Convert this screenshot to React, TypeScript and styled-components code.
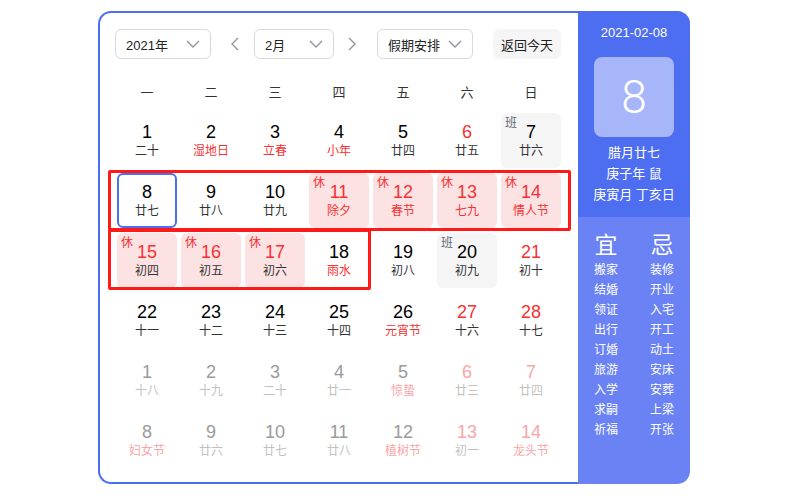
import * as React from 'react'
import styled, { createGlobalStyle } from 'styled-components'

const GlobalStyle = createGlobalStyle`
	html, body {
		margin: 0;
		padding: 0;
		background: #ffffff;
	}
	body {
		font-family: 'Liberation Sans', 'Noto Sans CJK SC', sans-serif;
	}
`

type Day = {
	n: number
	lunar: string
	numRed?: boolean
	lunarRed?: boolean
	tag?: '休' | '班'
	other?: boolean
	selected?: boolean
}

const weeks: Day[][] = [
	[
		{ n: 1, lunar: '二十' },
		{ n: 2, lunar: '湿地日', lunarRed: true },
		{ n: 3, lunar: '立春', lunarRed: true },
		{ n: 4, lunar: '小年', lunarRed: true },
		{ n: 5, lunar: '廿四' },
		{ n: 6, lunar: '廿五', numRed: true },
		{ n: 7, lunar: '廿六', tag: '班' },
	],
	[
		{ n: 8, lunar: '廿七', selected: true },
		{ n: 9, lunar: '廿八' },
		{ n: 10, lunar: '廿九' },
		{ n: 11, lunar: '除夕', tag: '休', numRed: true, lunarRed: true },
		{ n: 12, lunar: '春节', tag: '休', numRed: true, lunarRed: true },
		{ n: 13, lunar: '七九', tag: '休', numRed: true, lunarRed: true },
		{ n: 14, lunar: '情人节', tag: '休', numRed: true, lunarRed: true },
	],
	[
		{ n: 15, lunar: '初四', tag: '休', numRed: true },
		{ n: 16, lunar: '初五', tag: '休', numRed: true },
		{ n: 17, lunar: '初六', tag: '休', numRed: true },
		{ n: 18, lunar: '雨水', lunarRed: true },
		{ n: 19, lunar: '初八' },
		{ n: 20, lunar: '初九', tag: '班' },
		{ n: 21, lunar: '初十', numRed: true },
	],
	[
		{ n: 22, lunar: '十一' },
		{ n: 23, lunar: '十二' },
		{ n: 24, lunar: '十三' },
		{ n: 25, lunar: '十四' },
		{ n: 26, lunar: '元宵节', lunarRed: true },
		{ n: 27, lunar: '十六', numRed: true },
		{ n: 28, lunar: '十七', numRed: true },
	],
	[
		{ n: 1, lunar: '十八', other: true },
		{ n: 2, lunar: '十九', other: true },
		{ n: 3, lunar: '二十', other: true },
		{ n: 4, lunar: '廿一', other: true },
		{ n: 5, lunar: '惊蛰', lunarRed: true, other: true },
		{ n: 6, lunar: '廿三', numRed: true, other: true },
		{ n: 7, lunar: '廿四', numRed: true, other: true },
	],
	[
		{ n: 8, lunar: '妇女节', lunarRed: true, other: true },
		{ n: 9, lunar: '廿六', other: true },
		{ n: 10, lunar: '廿七', other: true },
		{ n: 11, lunar: '廿八', other: true },
		{ n: 12, lunar: '植树节', lunarRed: true, other: true },
		{ n: 13, lunar: '初一', numRed: true, other: true },
		{ n: 14, lunar: '龙头节', numRed: true, lunarRed: true, other: true },
	],
]

const weekdays = ['一', '二', '三', '四', '五', '六', '日']

const goodThings = ['搬家', '结婚', '领证', '出行', '订婚', '旅游', '入学', '求嗣', '祈福']
const badThings = ['装修', '开业', '入宅', '开工', '动土', '安床', '安葬', '上梁', '开张']

const Chevron = (): JSX.Element => (
	<svg width="14" height="8" viewBox="0 0 14 8" fill="none">
		<polyline points="1,1 7,7 13,1" stroke="#9195a3" strokeWidth="1.4" />
	</svg>
)

const Arrow = ({ dir }: { dir: 'left' | 'right' }): JSX.Element => (
	<svg width="8" height="14" viewBox="0 0 8 14" fill="none">
		<polyline
			points={dir === 'left' ? '7,1 1,7 7,13' : '1,1 7,7 1,13'}
			stroke="#9195a3"
			strokeWidth="1.4"
		/>
	</svg>
)

const cellKind = (d: Day): 'plain' | 'rest' | 'work' | 'selected' => {
	if (d.selected) return 'selected'
	if (d.tag === '休') return 'rest'
	if (d.tag === '班') return 'work'
	return 'plain'
}

export default function App(): JSX.Element {
	return (
		<>
			<GlobalStyle />
			<Page>
				<Calendar>
					<Main>
						<Toolbar>
							<Select $width={96}>
								<span>2021年</span>
								<Chevron />
							</Select>
							<ArrowButton $ml={12}>
								<Arrow dir="left" />
							</ArrowButton>
							<Select $width={80} $ml={7}>
								<span>2月</span>
								<Chevron />
							</Select>
							<ArrowButton $ml={6}>
								<Arrow dir="right" />
							</ArrowButton>
							<Select $width={96} $ml={13}>
								<span>假期安排</span>
								<Chevron />
							</Select>
							<TodayButton>返回今天</TodayButton>
						</Toolbar>
						<WeekHeader>
							{weekdays.map((w) => (
								<span key={w}>{w}</span>
							))}
						</WeekHeader>
						<Grid>
							{weeks.flat().map((d, i) => (
								<Cell key={i} $kind={cellKind(d)}>
									{d.tag && <Tag $rest={d.tag === '休'}>{d.tag}</Tag>}
									<Num $red={!!d.numRed} $muted={!!d.other}>
										{d.n}
									</Num>
									<Lunar $red={!!d.lunarRed} $muted={!!d.other}>
										{d.lunar}
									</Lunar>
								</Cell>
							))}
							<Mark style={{ left: -9, top: 57, width: 463, height: 61 }} />
							<Mark style={{ left: -9, top: 116, width: 263, height: 61 }} />
						</Grid>
					</Main>
					<Side>
						<Today>
							<DateLine>2021-02-08</DateLine>
							<BigDay>8</BigDay>
							<InfoLine>腊月廿七</InfoLine>
							<InfoLine>庚子年 鼠</InfoLine>
							<InfoLine>庚寅月 丁亥日</InfoLine>
						</Today>
						<Advice>
							<AdviceColumn>
								<AdviceTitle>宜</AdviceTitle>
								{goodThings.map((t) => (
									<AdviceItem key={t}>{t}</AdviceItem>
								))}
							</AdviceColumn>
							<AdviceColumn>
								<AdviceTitle>忌</AdviceTitle>
								{badThings.map((t) => (
									<AdviceItem key={t}>{t}</AdviceItem>
								))}
							</AdviceColumn>
						</Advice>
					</Side>
				</Calendar>
			</Page>
		</>
	)
}

const Page = styled.div`
	width: 795px;
	height: 501px;
	box-sizing: border-box;
	padding: 11px 0 0 98px;
`

const Calendar = styled.div`
	display: flex;
	width: 592px;
	height: 473px;
`

const Main = styled.div`
	width: 480px;
	box-sizing: border-box;
	border: 2px solid #4e6ef2;
	border-right: none;
	border-radius: 13px 0 0 13px;
	padding: 16px 17px 0 15px;
	display: flex;
	flex-direction: column;
`

const Toolbar = styled.div`
	display: flex;
	align-items: center;
	height: 30px;
`

const Select = styled.div<{ $width: number; $ml?: number }>`
	width: ${(p) => p.$width}px;
	height: 30px;
	margin-left: ${(p) => p.$ml || 0}px;
	box-sizing: border-box;
	border: 1px solid #d7d9e0;
	border-radius: 6px;
	padding: 0 10px 0 10px;
	display: flex;
	align-items: center;
	justify-content: space-between;
	font-size: 13px;
	color: #222222;
`

const ArrowButton = styled.div<{ $ml: number }>`
	width: 24px;
	height: 30px;
	margin-left: ${(p) => p.$ml}px;
	display: flex;
	align-items: center;
	justify-content: center;
`

const TodayButton = styled.div`
	width: 68px;
	height: 30px;
	margin-left: 20px;
	border-radius: 6px;
	background: #f5f5f6;
	font-size: 13px;
	color: #222222;
	display: flex;
	align-items: center;
	justify-content: center;
`

const WeekHeader = styled.div`
	display: grid;
	grid-template-columns: repeat(7, 60px);
	column-gap: 4px;
	margin: 12px 0 2px 2px;
	height: 40px;
	align-items: center;
	font-size: 13px;
	color: #333333;

	span {
		text-align: center;
	}
`

const Grid = styled.div`
	position: relative;
	margin-left: 2px;
	display: grid;
	grid-template-columns: repeat(7, 60px);
	grid-auto-rows: 55px;
	gap: 5px 4px;
`

const cellBg = {
	plain: 'transparent',
	rest: '#fde2e3',
	work: '#f5f5f6',
	selected: '#ffffff',
}

const Cell = styled.div<{ $kind: 'plain' | 'rest' | 'work' | 'selected' }>`
	position: relative;
	box-sizing: border-box;
	border-radius: 6px;
	background: ${(p) => cellBg[p.$kind]};
	border: 2px solid ${(p) => (p.$kind === 'selected' ? '#4e6ef2' : 'transparent')};
	display: flex;
	flex-direction: column;
	align-items: center;
	padding-top: 7px;
`

const Tag = styled.span<{ $rest: boolean }>`
	position: absolute;
	top: 0;
	left: 2px;
	font-size: 12px;
	line-height: 16px;
	color: ${(p) => (p.$rest ? '#f73131' : '#626675')};
`

const Num = styled.span<{ $red: boolean; $muted: boolean }>`
	font-size: 18px;
	line-height: 20px;
	color: ${(p) =>
		p.$muted ? (p.$red ? '#fba5a5' : '#9a9a9a') : p.$red ? '#f73131' : '#000000'};
`

const Lunar = styled.span<{ $red: boolean; $muted: boolean }>`
	margin-top: 1px;
	font-size: 12px;
	line-height: 16px;
	white-space: nowrap;
	color: ${(p) =>
		p.$muted ? (p.$red ? '#fba5a5' : '#c2c2c2') : p.$red ? '#f73131' : '#333333'};
`

const Mark = styled.div`
	position: absolute;
	box-sizing: border-box;
	border: 3px solid #ff1a1a;
	border-radius: 2px;
	pointer-events: none;
`

const Side = styled.div`
	width: 112px;
	border-radius: 0 13px 13px 0;
	overflow: hidden;
	display: flex;
	flex-direction: column;
	background: #6a82f4;
`

const Today = styled.div`
	height: 206px;
	box-sizing: border-box;
	background: #4e6ef2;
	display: flex;
	flex-direction: column;
	align-items: center;
	padding-top: 14px;
	color: #ffffff;
`

const DateLine = styled.div`
	font-size: 13px;
	line-height: 16px;
`

const BigDay = styled.div`
	margin: 16px 0 5px;
	width: 80px;
	height: 80px;
	flex-shrink: 0;
	border-radius: 8px;
	background: #a6b6f8;
	display: flex;
	align-items: center;
	justify-content: center;
	font-family: Roboto, 'Liberation Sans', sans-serif;
	font-weight: 300;
	font-size: 46px;
	color: #ffffff;
`

const InfoLine = styled.div`
	font-size: 13px;
	line-height: 21px;
	white-space: nowrap;
`

const Advice = styled.div`
	display: flex;
	padding-top: 14px;
`

const AdviceColumn = styled.div`
	width: 56px;
	display: flex;
	flex-direction: column;
	align-items: center;
	color: #ffffff;
`

const AdviceTitle = styled.div`
	font-size: 23px;
	line-height: 28px;
	margin-bottom: 1px;
`

const AdviceItem = styled.div`
	font-size: 12px;
	line-height: 20px;
`
